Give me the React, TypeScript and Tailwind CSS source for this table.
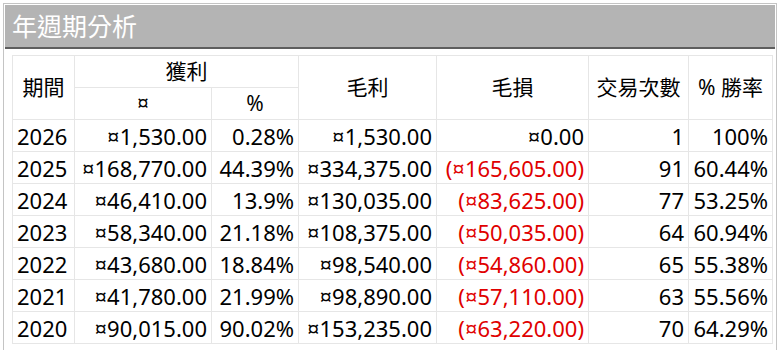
import React from "react";

type Row = {
  y: string;
  p: string;
  pct: string;
  gp: string;
  gl: string;
  neg: boolean;
  n: string;
  w: string;
};

const rows: Row[] = [
  { y: "2026", p: "¤1,530.00", pct: "0.28%", gp: "¤1,530.00", gl: "¤0.00", neg: false, n: "1", w: "100%" },
  { y: "2025", p: "¤168,770.00", pct: "44.39%", gp: "¤334,375.00", gl: "(¤165,605.00)", neg: true, n: "91", w: "60.44%" },
  { y: "2024", p: "¤46,410.00", pct: "13.9%", gp: "¤130,035.00", gl: "(¤83,625.00)", neg: true, n: "77", w: "53.25%" },
  { y: "2023", p: "¤58,340.00", pct: "21.18%", gp: "¤108,375.00", gl: "(¤50,035.00)", neg: true, n: "64", w: "60.94%" },
  { y: "2022", p: "¤43,680.00", pct: "18.84%", gp: "¤98,540.00", gl: "(¤54,860.00)", neg: true, n: "65", w: "55.38%" },
  { y: "2021", p: "¤41,780.00", pct: "21.99%", gp: "¤98,890.00", gl: "(¤57,110.00)", neg: true, n: "63", w: "55.56%" },
  { y: "2020", p: "¤90,015.00", pct: "90.02%", gp: "¤153,235.00", gl: "(¤63,220.00)", neg: true, n: "70", w: "64.29%" },
];

const cell = "border border-[#e6e6e6] h-[32px] px-[4px] leading-none whitespace-nowrap";
const head = `${cell} font-normal text-center text-[21px]`;

export default function App() {
  return (
    <div
      className="w-[778px] h-[350px] bg-white overflow-hidden"
      style={{ fontFamily: '"Noto Sans", "Noto Sans CJK TC", sans-serif' }}
    >
      <div className="mt-[3px] ml-[3px] mr-[1px] h-[400px] border-l border-t border-r border-[#c4c4c4] p-[1px]">
        <div className="h-[44px] bg-[#b4b4b4] border-b-2 border-[#5e5e5e] flex items-center pl-[7px]">
          <span className="text-white text-[25px] leading-none">年週期分析</span>
        </div>
        <table className="mt-[6px] ml-[7px] border-collapse text-[22px] text-black table-fixed w-[760px]">
          <colgroup>
            <col className="w-[62px]" />
            <col className="w-[137px]" />
            <col className="w-[87px]" />
            <col className="w-[138px]" />
            <col className="w-[152px]" />
            <col className="w-[100px]" />
            <col className="w-[84px]" />
          </colgroup>
          <thead>
            <tr>
              <th rowSpan={2} className={head}>期間</th>
              <th colSpan={2} className={`${head} h-[31px]`}>獲利</th>
              <th rowSpan={2} className={head}>毛利</th>
              <th rowSpan={2} className={head}>毛損</th>
              <th rowSpan={2} className={head}>交易次數</th>
              <th rowSpan={2} className={head}>% 勝率</th>
            </tr>
            <tr>
              <th className={head}>¤</th>
              <th className={head}>%</th>
            </tr>
          </thead>
          <tbody>
            {rows.map((r) => (
              <tr key={r.y}>
                <td className={`${cell} text-left`}>{r.y}</td>
                <td className={`${cell} text-right`}>{r.p}</td>
                <td className={`${cell} text-right`}>{r.pct}</td>
                <td className={`${cell} text-right`}>{r.gp}</td>
                <td className={`${cell} text-right ${r.neg ? "text-[#e00000]" : ""}`}>{r.gl}</td>
                <td className={`${cell} text-right`}>{r.n}</td>
                <td className={`${cell} text-right`}>{r.w}</td>
              </tr>
            ))}
          </tbody>
        </table>
      </div>
    </div>
  );
}
